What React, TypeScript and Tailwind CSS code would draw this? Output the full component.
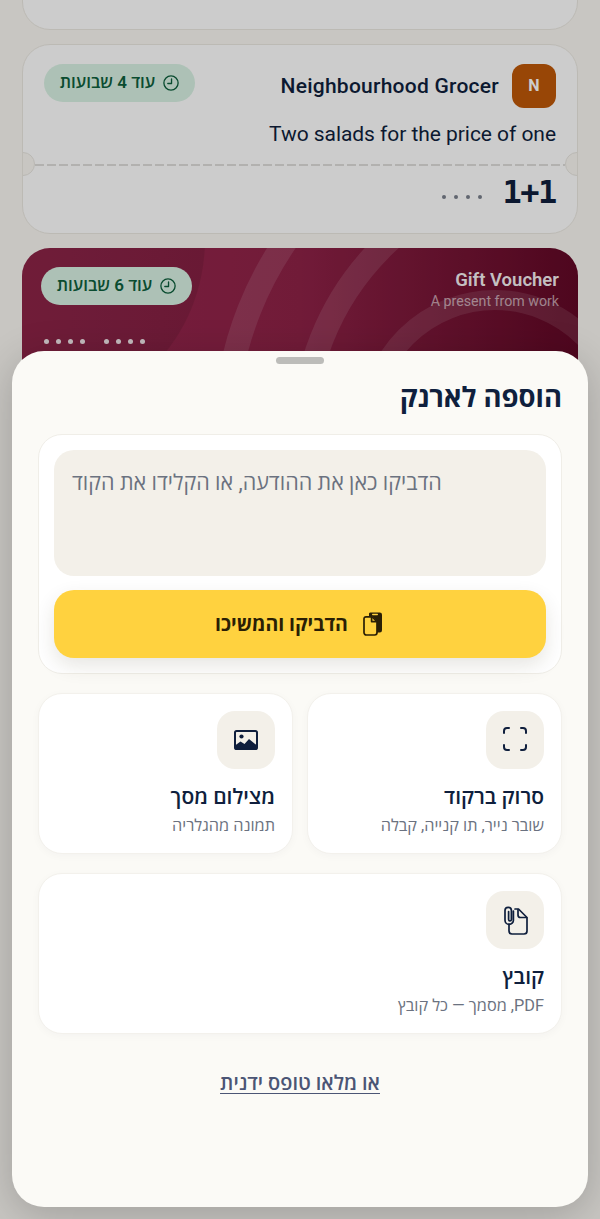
import React from "react";

const FONT = "[font-family:'Roboto','Noto_Sans','Open_Sans','Liberation_Sans',sans-serif]";

function Clock({ color }: { color: string }) {
  return (
    <svg width="16" height="16" viewBox="0 0 18 18" fill="none" stroke={color} strokeWidth="1.5" strokeLinecap="round" strokeLinejoin="round">
      <circle cx="9" cy="9" r="8" />
      <path d="M9.6 4.4V9.6H5.4" />
    </svg>
  );
}

function Badge({ label }: { label: string }) {
  return (
    <div className="h-[38px] w-[151px] rounded-full bg-[#d9f2e4] flex items-center justify-center gap-[8px] text-[#0d5f3c] text-[17px] font-semibold shrink-0">
      <Clock color="#0d5f3c" />
      <span>{label}</span>
    </div>
  );
}

function Notch({ side }: { side: "l" | "r" }) {
  return (
    <div
      className={
        "absolute top-[107px] w-6 h-6 rounded-full bg-[#faf8f3] border border-[#e8e6e0] " +
        (side === "l" ? "-left-[12px]" : "-right-[12px]")
      }
    />
  );
}

function GroceryCard() {
  return (
    <div className="relative h-[190px] rounded-[28px] bg-white border border-[#ece9e2] overflow-hidden shrink-0">
      <div className="flex items-start justify-between pt-[19px] pr-[21px] pl-[21px]">
        <div className="flex items-center gap-[13px]">
          <div className="w-[44px] h-[44px] rounded-[12px] bg-[#bf5808] flex items-center justify-center text-white text-[16px] font-bold">N</div>
          <div dir="ltr" className="text-[#0f1f3d] text-[21px] font-medium tracking-[0.25px] mt-[2px]">Neighbourhood Grocer</div>
        </div>
        <Badge label="עוד 4 שבועות" />
      </div>
      <div dir="ltr" className="text-right text-[#0f1f3d] text-[21px] leading-[24px] mt-[14px] pr-[21px] tracking-[-0.05px]">Two salads for the price of one</div>
      <div className="absolute top-[119px] left-[12px] right-[12px] h-[2px] bg-[repeating-linear-gradient(90deg,#dfdedb_0_9px,transparent_9px_12px)]" />
      <Notch side="l" />
      <Notch side="r" />
      <div className="absolute top-[128px] right-[21px] left-[21px] flex items-center gap-[20px]">
        <div dir="ltr" className="[font-family:'DejaVu_Sans_Mono',monospace] text-[#0f1f3d] text-[32px] font-bold leading-[38px] tracking-[-1.4px]">1+1</div>
        <div className="flex gap-[8px] mt-[9px]">
          {[0, 1, 2, 3].map((i) => (
            <span key={i} className="w-[4px] h-[4px] rounded-full bg-[#7a808c]" />
          ))}
        </div>
      </div>
    </div>
  );
}

function GiftCard() {
  return (
    <div className="relative h-[190px] rounded-[28px] overflow-hidden shrink-0 bg-gradient-to-r from-[#9a284f] via-[#8e2247] to-[#620826]">
      <svg className="absolute inset-0" width="556" height="190" viewBox="0 0 556 190" fill="none">
        <circle cx="3" cy="-8" r="180" fill="#000" fillOpacity="0.09" />
        <circle cx="548" cy="189" r="345" stroke="#fff" strokeOpacity="0.11" strokeWidth="24" />
        <circle cx="548" cy="189" r="267" stroke="#fff" strokeOpacity="0.11" strokeWidth="24" />
        <circle cx="473" cy="178" r="126" stroke="#fff" strokeOpacity="0.1" strokeWidth="20" />
      </svg>
      <div className="relative flex items-start justify-between pt-[19px] pr-[19px] pl-[19px]">
        <div dir="ltr" className="text-right pt-[2px]">
          <div className="text-white/95 text-[18.5px] font-semibold leading-[22px]">Gift Voucher</div>
          <div className="text-white/60 text-[14.2px] leading-[20px]">A present from work</div>
        </div>
        <Badge label="עוד 6 שבועות" />
      </div>
      <div dir="ltr" className="relative flex gap-[19px] mt-[28px] pl-[22px]">
        {[0, 1].map((g) => (
          <div key={g} className="flex gap-[7px]">
            {[0, 1, 2, 3].map((i) => (
              <span key={i} className="w-[5px] h-[5px] rounded-full bg-white/90" />
            ))}
          </div>
        ))}
      </div>
    </div>
  );
}

function IconBox({ children }: { children: React.ReactNode }) {
  return <div className="w-[58px] h-[58px] rounded-[18px] bg-[#f3f0e9] flex items-center justify-center">{children}</div>;
}

function ActionCard({ icon, title, sub }: { icon: React.ReactNode; title: string; sub: string }) {
  return (
    <div className="h-[161px] rounded-[24px] bg-white border border-[#f3f1ec] shadow-[0_2px_8px_rgba(15,31,61,0.03)] pt-[17px] pr-[17px] pl-[18px]">
      <IconBox>{icon}</IconBox>
      <div className="text-[#0f1f3d] text-[21px] font-semibold leading-[28px] mt-[14px]">{title}</div>
      <div className="text-[#6b7280] text-[16.3px] leading-[22px] mt-[4px]">{sub}</div>
    </div>
  );
}

export default function App() {
  return (
    <div dir="rtl" className={"relative w-[600px] h-[1219px] overflow-hidden bg-[#faf8f3] " + FONT}>
      <div className="flex flex-col gap-[14px] px-[22px] -mt-[160px]">
        <div className="h-[190px] rounded-[28px] bg-white border border-[#ece9e2] shrink-0" />
        <GroceryCard />
        <GiftCard />
      </div>

      <div className="absolute inset-0 bg-black/20" />

      <div className="absolute left-3 right-3 top-[351px] bottom-3 rounded-[32px] bg-[#fbfaf6] shadow-[0_8px_40px_rgba(0,0,0,0.2)] px-[26px]">
        <div className="mx-auto mt-[6px] w-[48px] h-[7px] rounded-full bg-[#bcbcb9]" />
        <h1 className="text-[#0f1f3d] text-[27.5px] font-bold leading-[36px] mt-[16px]">הוספה לארנק</h1>

        <div className="mt-[18px] rounded-[24px] bg-white border border-[#f0eee8] p-[15px] h-[240px]">
          <div className="h-[126px] rounded-[20px] bg-[#f3f0e9] text-[#6b7280] text-[21.5px] leading-[32px] pt-[17px] pl-[18px] text-left">
            הדביקו כאן את ההודעה, או הקלידו את הקוד
          </div>
          <div className="mt-[14px] h-[68px] rounded-[20px] bg-[#ffd23f] shadow-[0_8px_20px_rgba(60,50,20,0.12)] flex items-center justify-center gap-[15px] text-[#2a1f05] text-[19.5px] font-bold pr-[2px]">
            <svg width="20" height="24" viewBox="0 0 20 24" fill="none">
              <path d="M6 1.5a1.5 1.5 0 0 1 1.5-1h9.3A2.2 2.2 0 0 1 19 2.7v15.6a2.2 2.2 0 0 1-2.2 2.2H14V9L9.5 4.5H6z" fill="#2a1f05" />
              <rect x="9" y="1.8" width="6" height="1.4" rx="0.7" fill="#ffd23f" />
              <path d="M3 4.8h6.2L14 9.6v11A2.4 2.4 0 0 1 11.6 23H3.4A2.4 2.4 0 0 1 1 20.6V6.8a2 2 0 0 1 2-2z" fill="#ffd23f" stroke="#2a1f05" strokeWidth="1.7" strokeLinejoin="round" />
              <path d="M8.6 5v4.6H14" stroke="#2a1f05" strokeWidth="1.7" strokeLinejoin="round" />
            </svg>
            <span className="mt-[1px]">הדביקו והמשיכו</span>
          </div>
        </div>

        <div className="grid grid-cols-2 gap-[14px] mt-[19px]">
          <ActionCard
            title="סרוק ברקוד"
            sub="שובר נייר, תו קנייה, קבלה"
            icon={
              <svg width="24" height="24" viewBox="0 0 24 24" fill="none" stroke="#0f1f3d" strokeWidth="2" strokeLinecap="round" className="-mt-[2px]">
                <path d="M1 6V4a3 3 0 0 1 3-3h2M18 1h2a3 3 0 0 1 3 3v2M23 18v2a3 3 0 0 1-3 3h-2M6 23H4a3 3 0 0 1-3-3v-2" />
              </svg>
            }
          />
          <ActionCard
            title="מצילום מסך"
            sub="תמונה מהגלריה"
            icon={
              <svg width="24" height="20" viewBox="0 0 24 20" fill="none">
                <rect x="1" y="1" width="22" height="18" rx="1.6" stroke="#0f1f3d" strokeWidth="2" />
                <circle cx="7.5" cy="6.5" r="2.1" fill="#0f1f3d" />
                <path d="M1 18.5v-3l5.5-4 4 2.6 4.5-5 8 6.4v3.5z" fill="#0f1f3d" />
              </svg>
            }
          />
        </div>

        <div className="mt-[19px]">
          <ActionCard
            title="קובץ"
            sub="PDF, מסמך — כל קובץ"
            icon={
              <svg width="30" height="30" viewBox="0 0 30 30" fill="none" stroke="#0f1f3d" strokeWidth="1.7" strokeLinecap="round" strokeLinejoin="round">
                <path d="M15 4h3.5l8.5 8.5V26a3 3 0 0 1-3 3H12a3 3 0 0 1-3-3v-7" />
                <path d="M18 4.5V10a2.5 2.5 0 0 0 2.5 2.5h6" />
                <path d="M8.6 6.5v8a1.4 1.4 0 0 0 2.8 0V5.5a3.2 3.2 0 0 0-6.4 0v9.7a4.2 4.2 0 0 0 8.4 0V6" />
              </svg>
            }
          />
        </div>

        <div className="text-center mt-[35px]">
          <span className="text-[#4b5575] text-[20px] font-semibold underline decoration-1 underline-offset-[3px] leading-[28px]">או מלאו טופס ידנית</span>
        </div>
      </div>
    </div>
  );
}
